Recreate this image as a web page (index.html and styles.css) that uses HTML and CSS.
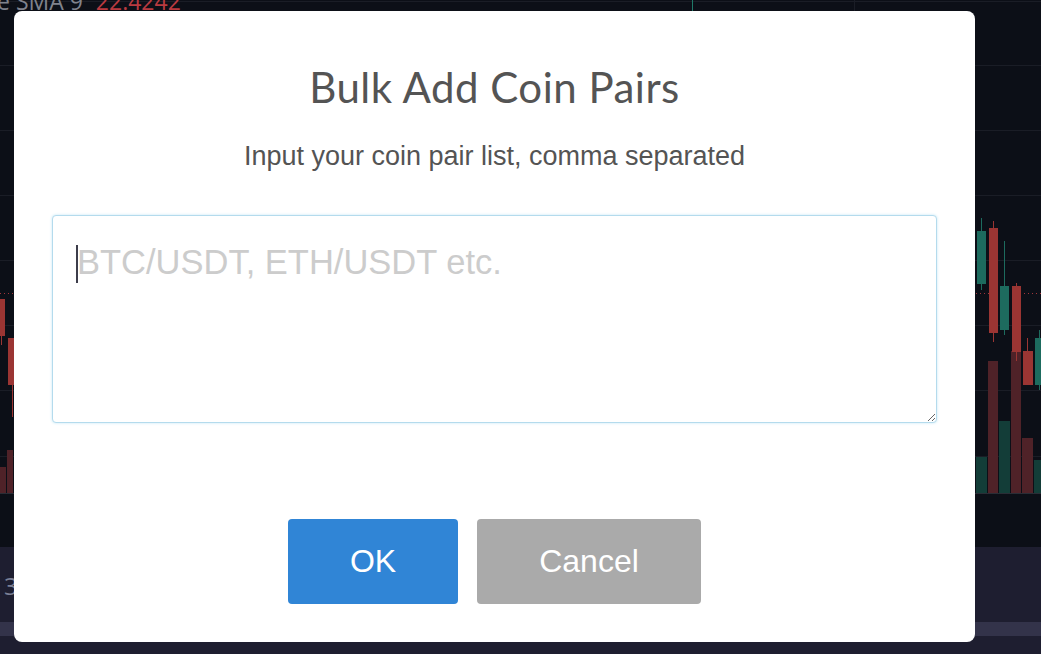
FILE: index.html
```html
<!DOCTYPE html>
<html>
<head>
<meta charset="utf-8">
<link rel="stylesheet" href="styles.css">
</head>
<body>
<div class="chart">
  <svg class="chart-svg" width="1041" height="654" viewBox="0 0 1041 654">
    <rect x="0" y="0" width="1041" height="654" fill="#0c0f17"/>
    <g stroke="#1a1d26" stroke-width="1">
      <line x1="0" y1="1.5" x2="1041" y2="1.5"/>
      <line x1="0" y1="65.5" x2="1041" y2="65.5"/>
      <line x1="0" y1="130.5" x2="1041" y2="130.5"/>
      <line x1="0" y1="195.5" x2="1041" y2="195.5"/>
      <line x1="0" y1="260.5" x2="1041" y2="260.5"/>
      <line x1="0" y1="325.5" x2="1041" y2="325.5"/>
      <line x1="0" y1="390.5" x2="1041" y2="390.5"/>
      <line x1="0" y1="456.5" x2="1041" y2="456.5"/>
      <line x1="854.5" y1="0" x2="854.5" y2="12"/>
    </g>
    <line x1="692.5" y1="0" x2="692.5" y2="12" stroke="#1f7a68"/>
    <line x1="0" y1="493.5" x2="1041" y2="493.5" stroke="#2a2d36"/>
    <line x1="0" y1="293.5" x2="1041" y2="293.5" stroke="#a0353a" stroke-dasharray="1 3"/>
    <g>
      <rect x="0" y="467" width="6" height="26" fill="#4f2228"/>
      <rect x="7" y="450" width="6" height="43" fill="#4f2228"/>
      <rect x="976" y="457" width="11" height="36" fill="#133d38"/>
      <rect x="988" y="361" width="10" height="132" fill="#4f2228"/>
      <rect x="999" y="421" width="11" height="72" fill="#133d38"/>
      <rect x="1011" y="351" width="10" height="142" fill="#4f2228"/>
      <rect x="1022" y="438" width="11" height="55" fill="#4f2228"/>
      <rect x="1034" y="460" width="7" height="33" fill="#133d38"/>
    </g>
    <g>
      <line x1="1.5" y1="299" x2="1.5" y2="345" stroke="#9b3533"/>
      <rect x="0" y="299" width="5" height="37" fill="#9b3533"/>
      <line x1="12.5" y1="338" x2="12.5" y2="417" stroke="#9b3533"/>
      <rect x="8" y="338" width="6" height="47" fill="#9b3533"/>

      <line x1="981.5" y1="218" x2="981.5" y2="290" stroke="#1d6b5e"/>
      <rect x="977" y="231" width="9" height="53" fill="#1d6b5e"/>
      <line x1="993.5" y1="221" x2="993.5" y2="342" stroke="#9b3533"/>
      <rect x="989" y="228" width="9" height="105" fill="#9b3533"/>
      <line x1="1004.5" y1="241" x2="1004.5" y2="335" stroke="#1d6b5e"/>
      <rect x="1000" y="286" width="9" height="44" fill="#1d6b5e"/>
      <line x1="1016.5" y1="283" x2="1016.5" y2="361" stroke="#9b3533"/>
      <rect x="1012" y="286" width="9" height="66" fill="#9b3533"/>
      <line x1="1027.5" y1="338" x2="1027.5" y2="385" stroke="#9b3533"/>
      <rect x="1023" y="351" width="10" height="34" fill="#9b3533"/>
      <line x1="1039.5" y1="330" x2="1039.5" y2="390" stroke="#1d6b5e"/>
      <rect x="1035" y="338" width="6" height="47" fill="#1d6b5e"/>
    </g>
    <rect x="0" y="547" width="1041" height="107" fill="#1e1e30"/>
    <rect x="0" y="622" width="1041" height="14" fill="#33334a"/>
  </svg>
  <div class="legend"><span class="legend-name">e SMA 9</span><span class="legend-value">22.4242</span></div>
  <div class="axis-label">3</div>
</div>

<div class="overlay">
  <div class="modal">
    <h2 class="modal-title">Bulk Add Coin Pairs</h2>
    <p class="modal-text">Input your coin pair list, comma separated</p>
    <div class="field">
      <span class="caret"></span>
      <textarea class="pairs-input" placeholder="BTC/USDT, ETH/USDT etc."></textarea>
    </div>
    <div class="actions">
      <button class="btn btn-ok">OK</button>
      <button class="btn btn-cancel">Cancel</button>
    </div>
  </div>
</div>
</body>
</html>
```

FILE: styles.css
```css
html, body {
  margin: 0;
  padding: 0;
  width: 1041px;
  height: 654px;
  overflow: hidden;
  background: #0c0f17;
}

.chart {
  position: relative;
  width: 1041px;
  height: 654px;
}

.chart-svg {
  display: block;
}

.legend {
  position: absolute;
  left: -3px;
  top: -13px;
  font-family: "Open Sans", "Liberation Sans", sans-serif;
  font-size: 23px;
  line-height: 28px;
  white-space: nowrap;
}

.legend-name {
  color: #80838d;
}

.legend-value {
  color: #b83a40;
  margin-left: 13px;
}

.axis-label {
  position: absolute;
  left: 4px;
  top: 574px;
  font-family: "Open Sans", "Liberation Sans", sans-serif;
  font-size: 24px;
  line-height: 24px;
  color: #7b8096;
}

.overlay {
  position: fixed;
  inset: 0;
  padding: 11px 0 0 14px;
}

.modal {
  box-sizing: border-box;
  width: 961px;
  height: 631px;
  background: #ffffff;
  border-radius: 8px;
  padding: 54px 38px 0 38px;
  display: flex;
  flex-direction: column;
  align-items: center;
}

.modal-title {
  margin: 0;
  font-family: "Lato", "Noto Sans", sans-serif;
  font-weight: 400;
  font-size: 42px;
  line-height: 44px;
  color: #545454;
  letter-spacing: 0.5px;
}

.modal-text {
  margin: 32px 0 0 0;
  font-family: "Liberation Sans", Arial, sans-serif;
  font-size: 27px;
  line-height: 30px;
  color: #545454;
}

.field {
  position: relative;
  margin-top: 44px;
  width: 885px;
  height: 208px;
}

.pairs-input {
  box-sizing: border-box;
  width: 885px;
  height: 208px;
  border: 1px solid #b4dbed;
  border-radius: 4px;
  box-shadow: 0 0 3px #c4e6f5;
  padding: 26px 24px;
  font-family: "Liberation Sans", Arial, sans-serif;
  font-size: 34.5px;
  line-height: 40px;
  color: #545454;
  outline: none;
  resize: both;
  display: block;
}

.pairs-input::placeholder {
  color: #cccccc;
}

.caret {
  position: absolute;
  left: 24px;
  top: 30px;
  width: 2px;
  height: 38px;
  background: #3d3d4a;
  z-index: 2;
}

.actions {
  display: flex;
  gap: 19px;
  margin-top: 96px;
}

.btn {
  height: 85px;
  border: none;
  border-radius: 4px;
  color: #ffffff;
  font-family: "Liberation Sans", Arial, sans-serif;
  font-size: 32px;
  padding: 0;
}

.btn-ok {
  width: 170px;
  background: #3085d6;
}

.btn-cancel {
  width: 224px;
  background: #aaaaaa;
}
```
